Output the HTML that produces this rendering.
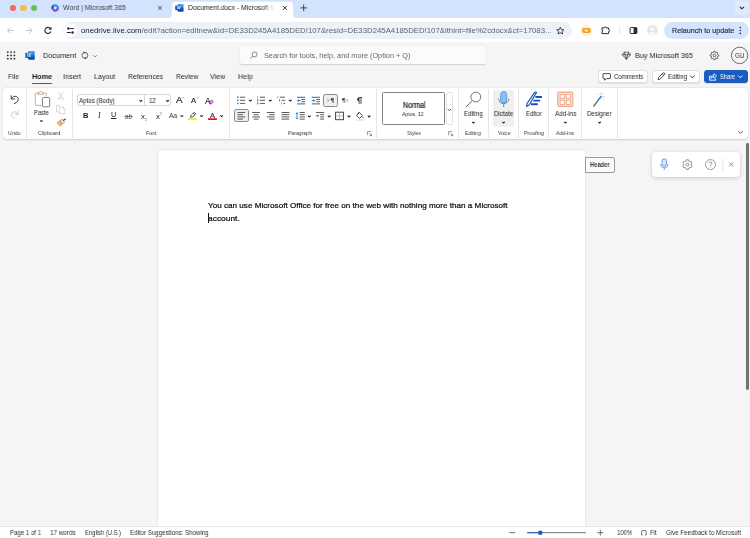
<!DOCTYPE html>
<html lang="en">
<head>
<meta charset="utf-8">
<title>Document.docx - Microsoft Word Online</title>
<style>
*{box-sizing:border-box;margin:0;padding:0}
html,body{width:750px;height:538px;overflow:hidden}
body{position:relative;font-family:"Liberation Sans",sans-serif;color:#242424;background:#f5f4f6;font-size:7px}
.abs,.t{position:absolute}
.t{white-space:nowrap;line-height:10px;height:10px;will-change:transform}
svg{position:absolute;overflow:visible}
#tabstrip{left:0;top:0;width:750px;height:18px;background:#d3e3fd}
#toolbar{left:0;top:17.6px;width:750px;height:24.4px;background:#fff}
#url{left:62.7px;top:22.1px;width:509px;height:16.8px;border-radius:8.4px;background:#edf1f9}
#relaunch{left:663.8px;top:21.9px;width:85.2px;height:17.2px;border-radius:8.6px;background:#d5e4fd}
#whead{left:0;top:42px;width:750px;height:46px;background:#f6f5f5}
#search{left:240px;top:46px;width:246px;height:18.2px;background:#fbfbfb;border-radius:2px;box-shadow:0 0.5px 1.2px rgba(0,0,0,.15)}
#ribbon{left:2.8px;top:88.2px;width:745.5px;height:50.8px;background:#fff;border-radius:4px;box-shadow:0 0.6px 2px rgba(0,0,0,.16)}
.sep{position:absolute;top:88.6px;width:1px;height:49px;background:#e6e6e6}
.gl{font-size:6.2px;color:#3a3a3a;top:127.6px}
.bl{font-size:7px;color:#1f1f1f;top:108.8px}
.menu{font-size:8px;color:#2c2c2c;top:71.9px}
#page{left:157.8px;top:149.8px;width:427.7px;height:376.5px;background:#fff;box-shadow:0 0 1.2px rgba(0,0,0,.22)}
#status{left:0;top:526px;width:750px;height:12px;background:#fff;border-top:1px solid #e6e6e6}
.st{font-size:7px;color:#2e2e2e;top:528.1px}
.btn{position:absolute;top:70.2px;height:12.7px;border-radius:3px;background:#fff;border:0.6px solid #e0e0e0;box-shadow:0 0.3px 0.8px rgba(0,0,0,.10)}
</style>
</head>
<body>
<!-- ===== CHROME TAB STRIP ===== -->
<div class="abs" id="tabstrip"></div>
<div class="abs" style="left:9.5px;top:4.7px;width:6.6px;height:6.6px;border-radius:50%;background:#ee6a5f"></div>
<div class="abs" style="left:20.1px;top:4.7px;width:6.6px;height:6.6px;border-radius:50%;background:#f5bd4f"></div>
<div class="abs" style="left:30.5px;top:4.7px;width:6.6px;height:6.6px;border-radius:50%;background:#61c454"></div>
<svg width="750" height="20" style="left:0;top:0" viewBox="0 0 750 20">
  <path d="M168.5 18 Q171.8 18 171.8 14.5 V5.5 Q171.8 1.8 175.5 1.8 H289.5 Q293.2 1.8 293.2 5.5 V14.5 Q293.2 18 296.5 18 Z" fill="#fff"/>
  <rect x="734.8" y="0.6" width="14.8" height="14.3" rx="4.5" fill="#e1eafd"/>
  <path d="M739.8 6.8 L741.9 8.8 L744 6.8" fill="none" stroke="#222" stroke-width="1.1"/>
  <!-- tab close X -->
  <path d="M158 5.9 L162 9.9 M162 5.9 L158 9.9" stroke="#444" stroke-width="0.85" fill="none"/>
  <path d="M282.9 5.9 L286.9 9.9 M286.9 5.9 L282.9 9.9" stroke="#222" stroke-width="0.9" fill="none"/>
  <path d="M300.4 7.9 H307 M303.7 4.6 V11.2" stroke="#333" stroke-width="0.9" fill="none"/>
  <!-- M365 favicon -->
  <g transform="translate(55.2 7.9)" fill="none" stroke-width="2.3" stroke-linecap="butt">
    <path d="M-2.3 1.3 A2.65 2.65 0 0 1 -1.3 -2.3" stroke="#2b55c8"/>
    <path d="M-1.3 -2.3 A2.65 2.65 0 0 1 2.55 -0.7" stroke="#3b93e6"/>
    <path d="M2.55 -0.7 A2.65 2.65 0 0 1 -0.2 2.65" stroke="#8b47c6"/>
    <path d="M-0.2 2.65 A2.65 2.65 0 0 1 -2.3 1.3" stroke="#5a5ad0"/>
  </g>
  <!-- Word favicon -->
  <g transform="translate(179.4 7.9)">
    <rect x="-1.6" y="-3.6" width="5.6" height="7.2" rx="0.6" fill="#2b7cd3"/>
    <rect x="-1.6" y="-0.1" width="5.6" height="1.9" fill="#185abd"/>
    <rect x="-1.6" y="1.8" width="5.6" height="1.8" rx="0.4" fill="#103f91"/>
    <rect x="-1.6" y="-3.6" width="5.6" height="1.8" rx="0.4" fill="#41a5ee"/>
    <rect x="-4.2" y="-2.3" width="4.7" height="4.7" rx="0.5" fill="#185abd"/>
  </g>
</svg>
<div class="t" style="left:63.3px;transform-origin:0 50%;transform:scaleX(0.9901);top:2.9px;font-size:6.9px;color:#3c4043">Word | Microsoft 365</div>
<div class="abs" style="left:188.4px;top:2.9px;width:88px;height:10px;overflow:hidden"><div class="t" style="left:0.0px;transform-origin:0 50%;transform:scaleX(0.9835);top:0;font-size:6.9px;color:#202124">Document.docx - Microsoft Word Online</div></div>
<div class="abs" style="left:262px;top:2.9px;width:15px;height:10px;background:linear-gradient(90deg,rgba(255,255,255,0),#fff 85%)"></div>
<div class="t" style="left:177.2px;top:5.5px;font-size:3.8px;line-height:5px;height:5px;color:#fff;font-weight:bold">W</div>

<!-- ===== CHROME TOOLBAR ===== -->
<div class="abs" id="toolbar"></div>
<div class="abs" id="url"></div>
<div class="abs" id="relaunch"></div>
<svg width="750" height="26" style="left:0;top:18px" viewBox="0 18 750 26">
  <!-- back / forward / reload -->
  <path d="M13.5 30.5 H7.6 M10.3 27.6 L7.4 30.5 L10.3 33.4" fill="none" stroke="#bcbfc4" stroke-width="0.9"/>
  <path d="M26 30.5 H31.9 M29.2 27.6 L32.1 30.5 L29.2 33.4" fill="none" stroke="#bcbfc4" stroke-width="0.9"/>
  <path d="M50.5 28.6 A3.1 3.1 0 1 0 50.9 31.5" fill="none" stroke="#2b2b2b" stroke-width="1.15"/>
  <path d="M51.5 26.7 V29.8 H48.4 Z" fill="#2b2b2b"/>
  <!-- site info -->
  <circle cx="70.5" cy="30.5" r="6.6" fill="#fff"/>
  <path d="M70 28.6 H74.2 M66.8 32.5 H71" stroke="#2b2b2b" stroke-width="1" fill="none"/>
  <circle cx="68.4" cy="28.6" r="1.25" fill="#2b2b2b"/><circle cx="72.6" cy="32.5" r="1.25" fill="#2b2b2b"/>
  <!-- star -->
  <path d="M560.3 27.2 L561.35 29.55 L563.9 29.8 L561.95 31.5 L562.55 34 L560.3 32.65 L558.05 34 L558.65 31.5 L556.7 29.8 L559.25 29.55 Z" fill="none" stroke="#2b2b2b" stroke-width="0.85" stroke-linejoin="round"/>
  <!-- orange ext -->
  <circle cx="586.3" cy="30.6" r="5.8" fill="#fdf0dc"/>
  <rect x="582.1" y="27.9" width="8.6" height="5.2" rx="1.8" fill="#f5a02c"/>
  <ellipse cx="586.2" cy="30.5" rx="1.5" ry="1.2" fill="#ffe9a8"/>
  <!-- puzzle -->
  <path d="M601.9 27.9 H604.25 A0.95 0.95 0 0 1 606.15 27.9 H608.6 V29.75 A0.95 0.95 0 0 1 608.6 31.65 V33.6 H601.9 V31.6 A0.9 0.9 0 0 0 601.9 29.8 Z" fill="none" stroke="#2b2b2b" stroke-width="1" stroke-linejoin="miter"/>
  <path d="M619.6 27 V34" stroke="#d3d9e6" stroke-width="0.7"/>
  <!-- side panel -->
  <rect x="630.1" y="27.6" width="6.8" height="5.9" rx="0.8" fill="#fff" stroke="#2b2b2b" stroke-width="1"/>
  <rect x="633.6" y="27.6" width="3.3" height="5.9" fill="#2b2b2b"/>
  <!-- avatar -->
  <circle cx="652.4" cy="30.3" r="5.4" fill="#e6e6e6"/>
  <circle cx="652.3" cy="29" r="2" fill="#fafafa"/>
  <path d="M648.9 34.5 A3.6 3.6 0 0 1 655.7 34.5 A5.3 5.3 0 0 1 648.9 34.5 Z" fill="#fafafa"/>
  <!-- dots -->
  <circle cx="740.3" cy="27.6" r="0.8" fill="#1f2a44"/><circle cx="740.3" cy="30.5" r="0.8" fill="#1f2a44"/><circle cx="740.3" cy="33.4" r="0.8" fill="#1f2a44"/>
</svg>
<div class="t" style="left:81.0px;transform-origin:0 50%;transform:scaleX(1.0258);top:26px;font-size:7.6px;color:#5f6368"><span style="color:#202124">onedrive.live.com</span>/edit?action=editnew&amp;id=DE33D245A4185DED!107&amp;resid=DE33D245A4185DED!107&amp;ithint=file%2cdocx&amp;ct=17083...</div>
<div class="t" style="left:671.6px;transform-origin:0 50%;transform:scaleX(1.0244);top:25.8px;font-size:7px;color:#1f2a44;-webkit-text-stroke:0.15px #1f2a44">Relaunch to update</div>

<!-- ===== WORD HEADER ===== -->
<div class="abs" id="whead"></div>
<div class="abs" id="search"></div>
<svg width="750" height="46" style="left:0;top:42px" viewBox="0 42 750 46">
  <!-- waffle -->
  <g fill="#1f1f1f"><circle cx="7.8" cy="52.1" r="0.85"/><circle cx="11.1" cy="52.1" r="0.85"/><circle cx="14.4" cy="52.1" r="0.85"/><circle cx="7.8" cy="55.4" r="0.85"/><circle cx="11.1" cy="55.4" r="0.85"/><circle cx="14.4" cy="55.4" r="0.85"/><circle cx="7.8" cy="58.7" r="0.85"/><circle cx="11.1" cy="58.7" r="0.85"/><circle cx="14.4" cy="58.7" r="0.85"/></g>
  <!-- Word icon -->
  <g transform="translate(30.1 55.4)">
    <rect x="-1.8" y="-4.1" width="6.3" height="8.2" rx="0.7" fill="#2b7cd3"/>
    <rect x="-1.8" y="-4.1" width="6.3" height="2.1" rx="0.5" fill="#41a5ee"/>
    <rect x="-1.8" y="0" width="6.3" height="2.1" fill="#185abd"/>
    <rect x="-1.8" y="2" width="6.3" height="2.1" rx="0.5" fill="#103f91"/>
    <rect x="-4.7" y="-2.6" width="5.3" height="5.3" rx="0.55" fill="#185abd"/>
  </g>
  <!-- sync -->
  <circle cx="84.9" cy="55.4" r="2.9" fill="none" stroke="#3a3a3a" stroke-width="0.75"/>
  <path d="M83.5 51.6 L85.6 52.5 L83.9 53.6 Z M86.3 59.2 L84.2 58.3 L85.9 57.2 Z" fill="#2b2b2b"/>
  <path d="M93.4 55.2 L95.2 57 L97 55.2" fill="none" stroke="#555" stroke-width="0.75"/>
  <!-- search icon -->
  <circle cx="254.6" cy="54.4" r="2.5" fill="none" stroke="#666" stroke-width="0.75"/>
  <path d="M252.8 56.2 L250.3 58.7" stroke="#666" stroke-width="0.8" fill="none"/>
  <!-- diamond -->
  <path d="M624.2 52.2 H628.6 L630.6 54.7 L626.4 59.3 L622.2 54.7 Z M622.2 54.7 H630.6 M624.2 52.2 L625.1 54.7 L626.4 59.3 L627.7 54.7 L628.6 52.2" fill="none" stroke="#2b2b2b" stroke-width="0.7" stroke-linejoin="round"/>
  <!-- gear -->
  <g transform="translate(714.5 55.5)" fill="none" stroke="#4a4a4a" stroke-width="0.8" stroke-linejoin="round">
    <path d="M-0.80 -3.20 L-0.60 -4.26 L0.60 -4.26 L0.80 -3.20 L1.70 -2.83 L2.59 -3.43 L3.43 -2.59 L2.83 -1.70 L3.20 -0.80 L4.26 -0.60 L4.26 0.60 L3.20 0.80 L2.83 1.70 L3.43 2.59 L2.59 3.43 L1.70 2.83 L0.80 3.20 L0.60 4.26 L-0.60 4.26 L-0.80 3.20 L-1.70 2.83 L-2.59 3.43 L-3.43 2.59 L-2.83 1.70 L-3.20 0.80 L-4.26 0.60 L-4.26 -0.60 L-3.20 -0.80 L-2.83 -1.70 L-3.43 -2.59 L-2.59 -3.43 L-1.70 -2.83 Z"/>
    <circle r="1.4"/>
  </g>
  <circle cx="739.6" cy="55.4" r="8.2" fill="#f6f5f5" stroke="#4a4a4a" stroke-width="0.8"/>
</svg>
<div class="t" style="left:26.9px;top:53.2px;font-size:4.6px;line-height:6px;height:6px;color:#cfe4fb;font-weight:bold">W</div>
<div class="t" style="left:42.8px;transform-origin:0 50%;transform:scaleX(0.9104);top:50.8px;font-size:8px;color:#242424">Document</div>
<div class="t" style="left:263.6px;transform-origin:0 50%;transform:scaleX(1.0164);top:50.8px;font-size:7.2px;color:#666">Search for tools, help, and more (Option + Q)</div>
<div class="t" style="left:634.8px;transform-origin:0 50%;transform:scaleX(0.9542);top:50.6px;font-size:7.6px;color:#242424">Buy Microsoft 365</div>
<div class="t" style="left:735.0px;transform-origin:0 50%;transform:scaleX(0.8952);top:50.5px;font-size:7px;color:#333">GU</div>

<!-- ===== MENU ROW ===== -->
<div class="t menu" style="left:8.4px;transform-origin:0 50%;transform:scaleX(0.8533);">File</div>
<div class="t menu" style="left:31.6px;transform-origin:0 50%;transform:scaleX(0.9085);font-weight:bold;color:#1a1a1a">Home</div>
<div class="abs" style="left:31.9px;top:82.7px;width:19.8px;height:1.3px;background:#2160c4;border-radius:1px"></div>
<div class="t menu" style="left:63.4px;transform-origin:0 50%;transform:scaleX(0.9093);">Insert</div>
<div class="t menu" style="left:94.3px;transform-origin:0 50%;transform:scaleX(0.8863);">Layout</div>
<div class="t menu" style="left:128.4px;transform-origin:0 50%;transform:scaleX(0.8553);">References</div>
<div class="t menu" style="left:175.8px;transform-origin:0 50%;transform:scaleX(0.8538);">Review</div>
<div class="t menu" style="left:210.4px;transform-origin:0 50%;transform:scaleX(0.8836);">View</div>
<div class="t menu" style="left:238.4px;transform-origin:0 50%;transform:scaleX(0.8995);">Help</div>
<div class="btn" style="left:598px;width:49.8px"></div>
<div class="btn" style="left:652px;width:48px"></div>
<div class="btn" style="left:704.1px;width:44.3px;background:#1a5cbf;border-color:#1a5cbf"></div>
<svg width="160" height="20" style="left:590px;top:68px" viewBox="590 68 160 20">
  <!-- comment -->
  <path d="M603.6 73.6 H609.8 Q610.4 73.6 610.4 74.2 V78 Q610.4 78.6 609.8 78.6 H606.4 L604.6 80.2 V78.6 H603.6 Q603 78.6 603 78 V74.2 Q603 73.6 603.6 73.6 Z" fill="none" stroke="#2b2b2b" stroke-width="0.85" stroke-linejoin="round"/>
  <!-- pencil -->
  <path d="M658 79.6 L658.6 77.4 L663 73 Q663.8 72.4 664.5 73.1 Q665.2 73.9 664.5 74.6 L660.2 79 Z M662.2 73.8 L663.8 75.4" fill="none" stroke="#2b2b2b" stroke-width="0.85" stroke-linejoin="round"/>
  <path d="M690.2 75.6 L692.4 77.8 L694.6 75.6" fill="none" stroke="#2b2b2b" stroke-width="1"/>
  <!-- share -->
  <path d="M711.2 76 H709.6 V80.2 H715.6 V78.6" fill="none" stroke="#fff" stroke-width="0.9" stroke-linejoin="round"/>
  <path d="M711 78.4 Q711.2 75.4 714 75.3 V73.6 L716.6 76 L714 78.3 V76.8 Q712 76.8 711 78.4 Z" fill="none" stroke="#fff" stroke-width="0.85" stroke-linejoin="round"/>
  <path d="M738.2 75.6 L740.4 77.8 L742.6 75.6" fill="none" stroke="#fff" stroke-width="1"/>
</svg>
<div class="t" style="left:614.0px;transform-origin:0 50%;transform:scaleX(0.8657);top:71.6px;font-size:7px;color:#242424">Comments</div>
<div class="t" style="left:667.8px;transform-origin:0 50%;transform:scaleX(0.8969);top:71.6px;font-size:7px;color:#242424">Editing</div>
<div class="t" style="left:719.8px;transform-origin:0 50%;transform:scaleX(0.8134);top:71.6px;font-size:7px;color:#fff">Share</div>

<!-- ===== RIBBON ===== -->
<div class="abs" id="ribbon"></div>
<div class="sep" style="left:25.8px"></div>
<div class="sep" style="left:71.8px"></div>
<div class="sep" style="left:229.4px"></div>
<div class="sep" style="left:376.4px"></div>
<div class="sep" style="left:457.6px"></div>
<div class="sep" style="left:488px"></div>
<div class="sep" style="left:517.9px"></div>
<div class="sep" style="left:548.2px"></div>
<div class="sep" style="left:581px"></div>
<div class="sep" style="left:616.6px"></div>
<!-- selected / hover backgrounds -->
<div class="abs" style="left:492.8px;top:89.8px;width:21.6px;height:37.4px;background:#efefef;border-radius:2px"></div>
<div class="abs" style="left:323px;top:94px;width:14.8px;height:12.7px;background:#efefef;border:0.8px solid #8a8a8a;border-radius:2.2px"></div>
<div class="abs" style="left:234px;top:109.2px;width:14.8px;height:12.6px;background:#efefef;border:0.8px solid #8a8a8a;border-radius:2.2px"></div>
<!-- font boxes -->
<div class="abs" style="left:77.4px;top:94.4px;width:93.3px;height:12.1px;border:0.6px solid #d8d8d8;border-radius:2px;background:#fff"></div>
<div class="abs" style="left:144.3px;top:94.4px;width:0.6px;height:12.1px;background:#d8d8d8"></div>
<!-- styles gallery -->
<div class="abs" style="left:381.6px;top:92.2px;width:63px;height:32.4px;border:1.1px solid #808080;border-radius:1.5px;background:#fff"></div>
<div class="abs" style="left:445.6px;top:92.2px;width:7.8px;height:32.4px;border:0.6px solid #e2e2e2;border-radius:1.5px;background:#fff"></div>

<svg width="750" height="54" style="left:0;top:86px" viewBox="0 86 750 54">
  <!-- Undo -->
  <path d="M11.2 95.3 V99 H14.9" fill="none" stroke="#2b2b2b" stroke-width="0.9" stroke-linejoin="round"/>
  <path d="M11.4 98.8 Q13.6 95 16.6 96.4 Q19.2 98 17.9 100.9 Q17 102.5 13.8 103.8" fill="none" stroke="#2b2b2b" stroke-width="0.9"/>
  <!-- Redo (disabled) -->
  <path d="M18.2 110.7 V114.3 H14.6" fill="none" stroke="#c8c8c8" stroke-width="0.85" stroke-linejoin="round"/>
  <path d="M18 114.1 Q15.7 110.7 12.9 112 Q10.4 113.4 11.6 116 Q12.4 117.4 15 118.6" fill="none" stroke="#c8c8c8" stroke-width="0.85"/>
  <!-- Paste -->
  <path d="M41.6 105.4 H36 Q35.3 105.4 35.3 104.7 V93.8 Q35.3 93.1 36 93.1 H38 M43.4 93.1 H45.6 Q46.3 93.1 46.3 93.8 V96.6" fill="none" stroke="#f0a04b" stroke-width="0.9"/>
  <path d="M37.8 94.2 V93 L40.7 91.4 L43.6 93 V94.2 Z" fill="#fff" stroke="#8a8a8a" stroke-width="0.7" stroke-linejoin="round"/>
  <rect x="42.4" y="97.5" width="7.3" height="9.3" rx="0.9" fill="#fff" stroke="#666c75" stroke-width="0.85"/>
  <path d="M40.15 120.3 L41.4 121.55 L42.65 120.3" fill="none" stroke="#2a2a2a" stroke-width="1.05"/>
  <!-- Cut (disabled) -->
  <path d="M58.6 92.6 L62 98 M62.8 92.6 L59.4 98" stroke="#c4c4c4" stroke-width="0.7" fill="none"/>
  <circle cx="58.9" cy="98.6" r="0.95" fill="none" stroke="#a9cfe8" stroke-width="0.6"/><circle cx="62.5" cy="98.6" r="0.95" fill="none" stroke="#a9cfe8" stroke-width="0.6"/>
  <!-- Copy (disabled) -->
  <path d="M59.6 106.6 V105.4 H56.5 V112 H58.8" fill="none" stroke="#c8c8c8" stroke-width="0.7"/>
  <path d="M59.2 107 H63 L64.8 108.8 V113.6 H59.2 Z M63 107 V108.8 H64.8" fill="#fff" stroke="#c8c8c8" stroke-width="0.7" stroke-linejoin="round"/>
  <!-- Format painter -->
  <path d="M62.9 120.8 L65.4 119" stroke="#444" stroke-width="1.1" stroke-linecap="round" fill="none"/>
  <path d="M60.3 120.6 L62.2 119.3 L64.5 122.3 L62.4 123.7 Z" fill="#fff" stroke="#555" stroke-width="0.6" stroke-linejoin="round"/>
  <path d="M57 122.9 L60.2 120.6 L62.4 123.8 L60.4 126.2 Z" fill="#f7b26a" stroke="#e8842a" stroke-width="0.7" stroke-linejoin="round"/>
  <!-- font chevrons -->
  <path d="M139.45 100.20 L140.8 101.50 L142.15 100.20" fill="none" stroke="#2a2a2a" stroke-width="1.05"/>
  <path d="M166.25 100.20 L167.6 101.50 L168.95 100.20" fill="none" stroke="#2a2a2a" stroke-width="1.05"/>
  <!-- grow/shrink carets -->
  <path d="M182.2 98.4 L183.2 97.3 L184.2 98.4" fill="none" stroke="#2b88d8" stroke-width="0.6"/>
  <path d="M196.6 97.3 L197.6 98.4 L198.6 97.3" fill="none" stroke="#2b88d8" stroke-width="0.6"/>
  <!-- clear fmt eraser -->
  <path d="M208.9 102.7 L211.7 99.9 L213.5 101.6 L210.8 104.4 Z" fill="#d9a3e6" stroke="#a83cc0" stroke-width="0.8" stroke-linejoin="round"/>
  <!-- Aa / highlight / font color chevrons -->
  <path d="M180.45 115.30 L181.8 116.60 L183.15 115.30" fill="none" stroke="#2a2a2a" stroke-width="1.05"/>
  <path d="M200.25 115.30 L201.6 116.60 L202.95 115.30" fill="none" stroke="#2a2a2a" stroke-width="1.05"/>
  <path d="M220.25 115.30 L221.6 116.60 L222.95 115.30" fill="none" stroke="#2a2a2a" stroke-width="1.05"/>
  <!-- highlighter -->
  <path d="M190.4 117.3 L191 115.4 L194.1 112.3 L195.7 113.9 L192.6 117 Z M193.2 113.2 L194.8 114.8" fill="none" stroke="#2b2b2b" stroke-width="0.8" stroke-linejoin="round"/>
  <rect x="187.8" y="118.3" width="9.2" height="1.8" rx="0.5" fill="#fbe71e"/>
  <rect x="207.9" y="118.2" width="9.1" height="1.8" rx="0.4" fill="#e81123"/>
  <!-- strikethrough line -->
  <path d="M124.4 116.5 H132.8" stroke="#444" stroke-width="0.6"/>
  <!-- ===== Paragraph row 1 ===== -->
  <g stroke="#4a4a4a" stroke-width="0.9" fill="none">
    <path d="M240 97.2 H245.2 M240 100.3 H245.2 M240 103.4 H245.2"/>
    <path d="M259.8 97.2 H265 M259.8 100.3 H265 M259.8 103.4 H265"/>
    <path d="M279.8 97.2 H285 M281.6 100.3 H285 M283.4 103.4 H285"/>
    <path d="M297 97.3 H305.2 M301.4 99.5 H305.2 M301.4 101.7 H305.2 M297 103.9 H305.2"/>
    <path d="M311.8 97.3 H320 M316.2 99.5 H320 M316.2 101.7 H320 M311.8 103.9 H320"/>
  </g>
  <g fill="#2b88d8">
    <rect x="237.1" y="96.5" width="1.5" height="1.5"/><rect x="237.1" y="99.6" width="1.5" height="1.5"/><rect x="237.1" y="102.7" width="1.5" height="1.5"/>
    <rect x="257.3" y="96.2" width="0.7" height="2"/><rect x="257.1" y="99.3" width="1.2" height="2"/><rect x="257.1" y="102.4" width="1.2" height="2"/>
    <rect x="277.5" y="96.2" width="0.7" height="2"/><rect x="279" y="99.3" width="1" height="2"/><rect x="281.2" y="102.6" width="0.7" height="1.8"/>
    <path d="M297 100.6 L299 98.9 V100.1 H300.7 V101.1 H299 V102.3 Z"/>
    <path d="M315.4 100.6 L313.4 98.9 V100.1 H311.7 V101.1 H313.4 V102.3 Z"/>
  </g>
  <g fill="none" stroke="#2a2a2a" stroke-width="1.05">
    <path d="M249.05 99.80 L250.4 101.10 L251.75 99.80"/><path d="M268.95 99.80 L270.3 101.10 L271.65 99.80"/><path d="M288.95 99.80 L290.3 101.10 L291.65 99.80"/>
    <path d="M307.95 115.60 L309.3 116.90 L310.65 115.60"/><path d="M327.85 115.60 L329.2 116.90 L330.55 115.60"/><path d="M347.55 115.60 L348.9 116.90 L350.25 115.60"/><path d="M367.75 115.60 L369.1 116.90 L370.45 115.60"/>
  </g>
  <!-- LTR / RTL / pilcrow -->
  <path d="M327.4 99.2 L328.8 100.5 L327.4 101.8" fill="none" stroke="#2f6fb5" stroke-width="0.7"/>
  <path d="M333.9 98.5 H331.8 M332.5 98.5 V102.7 M333.5 98.5 V102.7" fill="none" stroke="#2b2b2b" stroke-width="0.55"/>
  <path d="M332.3 98.3 H331.8 A1.15 1.15 0 0 0 331.8 100.6 H332.3 Z" fill="#2b2b2b"/>
  <path d="M345.2 98.5 H343.1 M343.8 98.5 V102.7 M344.8 98.5 V102.7" fill="none" stroke="#2b2b2b" stroke-width="0.55"/>
  <path d="M343.6 98.3 H343.1 A1.15 1.15 0 0 0 343.1 100.6 H343.6 Z" fill="#2b2b2b"/>
  <path d="M348 99.2 L346.6 100.5 L348 101.8" fill="none" stroke="#2b88d8" stroke-width="0.7"/>
  <path d="M362 97.5 H359.2 A1.9 1.9 0 0 0 359.2 101.2 V103.9 M361 97.5 V103.9" fill="none" stroke="#222" stroke-width="0.8"/>
  <path d="M359.4 97.5 A1.85 1.85 0 0 0 359.4 101.2 Z" fill="#222"/>
  <!-- ===== Paragraph row 2 ===== -->
  <g stroke="#4a4a4a" stroke-width="0.9" fill="none">
    <path d="M237.4 112.5 H245.2 M237.4 114.7 H243 M237.4 116.9 H245.2 M237.4 119.1 H243"/>
    <path d="M252.2 112.5 H260 M253.6 114.7 H258.6 M252.2 116.9 H260 M253.6 119.1 H258.6"/>
    <path d="M266.8 112.5 H274.6 M269.2 114.7 H274.6 M266.8 116.9 H274.6 M269.2 119.1 H274.6"/>
    <path d="M281.5 112.5 H289.3 M281.5 114.7 H289.3 M281.5 116.9 H289.3 M281.5 119.1 H289.3"/>
    <path d="M299.6 112.5 H304.8 M299.6 114.7 H304.8 M299.6 116.9 H304.8 M299.6 119.1 H304.8"/>
    <path d="M316 112.5 H324 M320.2 114.7 H324 M320.2 116.9 H324 M320.2 119.1 H324"/>
  </g>
  <g fill="#2b88d8">
    <path d="M297 112 L298.5 113.9 H297.45 V117.7 H298.5 L297 119.6 L295.5 117.7 H296.55 V113.9 H295.5 Z"/>
    <path d="M319.2 115.8 L317.4 114.2 V115.3 H315.8 V116.3 H317.4 V117.4 Z"/>
  </g>
  <!-- borders -->
  <rect x="335.6" y="112.2" width="7.8" height="7.5" fill="#fff" stroke="#333" stroke-width="0.9"/>
  <path d="M339.5 112.4 V119.5 M335.8 115.95 H343.2" stroke="#9a9a9a" stroke-width="0.6" fill="none"/>
  <!-- shading -->
  <path d="M359.3 112.5 L362.4 115.6 L359.5 118.5 L356.5 115.5 Z M357.6 114.3 L359.2 111.9" fill="#fff" stroke="#2b2b2b" stroke-width="0.85" stroke-linejoin="round"/>
  <path d="M363 116 Q364 117.4 363.5 118 Q363 118.5 362.5 118 Q362 117.4 363 116 Z" fill="#2b88d8"/>
  <rect x="356.2" y="119.4" width="7.6" height="1.3" fill="#f4f4f4" stroke="#ccc" stroke-width="0.3"/>
  <!-- dialog launchers -->
  <g fill="none" stroke="#555" stroke-width="0.6">
    <path d="M371 131.6 H367.4 V135.2 M369.2 133.4 L371.4 135.6 M371.5 133.8 V135.7 H369.6"/>
    <path d="M452.2 131.6 H448.6 V135.2 M450.4 133.4 L452.6 135.6 M452.7 133.8 V135.7 H450.8"/>
  </g>
  <path d="M447.7 108.9 L449.4 110.6 L451.1 108.9" fill="none" stroke="#333" stroke-width="0.85"/>
  <path d="M738.3 131.2 L740.5 133.4 L742.7 131.2" fill="none" stroke="#3a3a3a" stroke-width="0.8"/>
  <!-- ===== Large buttons ===== -->
  <!-- Editing magnifier -->
  <circle cx="475.8" cy="97" r="4.9" fill="none" stroke="#555" stroke-width="0.8"/>
  <path d="M472.3 100.5 L465.8 107.2" stroke="#555" stroke-width="0.9" fill="none"/>
  <!-- Dictate mic -->
  <rect x="500.7" y="91.6" width="6" height="11.4" rx="3" fill="#83c3f3" stroke="#3f87d6" stroke-width="0.7"/>
  <path d="M498.6 98.6 A5.1 5.1 0 0 0 508.8 98.6 M503.7 103.8 V107.2" fill="none" stroke="#5b6f8e" stroke-width="0.8"/>
  <!-- Editor -->
  <path d="M526.6 106.4 L527.2 103.2 L534.4 92.6 Q535.4 91.6 536.6 92.4 L533.6 97.2 L529.4 104.8 Z" fill="#fff" stroke="#1b50b6" stroke-width="1.15" stroke-linejoin="round"/>
  <path d="M535.4 97 H542 M533.4 100.6 H540.2 M531 104.2 H537.8" stroke="#1b50b6" stroke-width="1.9" fill="none"/>
  <!-- Add-ins -->
  <rect x="557.8" y="92.1" width="15" height="14.3" rx="0.8" fill="#fbe1d6" stroke="#e9855e" stroke-width="0.8"/>
  <g fill="#fff" stroke="#e9855e" stroke-width="0.6">
    <rect x="560.1" y="94.3" width="4.4" height="4.2"/><rect x="566.2" y="94.3" width="4.4" height="4.2"/>
    <rect x="560.1" y="100.2" width="4.4" height="4.2"/><rect x="566.2" y="100.2" width="4.4" height="4.2"/>
  </g>
  <!-- Designer -->
  <path d="M593.8 106 L599.8 98.2" stroke="#666" stroke-width="1.3" stroke-linecap="round" fill="none"/>
  <path d="M599.6 98.5 L601.2 96.4" stroke="#2b88d8" stroke-width="1.6" stroke-linecap="round" fill="none"/>
  <path d="M600.6 92.8 V94.2 M598 93.8 L598.8 94.8 M603.4 94 L602.6 95 M604.4 96.8 H603 M603.8 99.6 L602.8 98.8" stroke="#3a8ad8" stroke-width="0.55" fill="none"/>
  <!-- big-button chevrons -->
  <g fill="none" stroke="#2a2a2a" stroke-width="1.05">
    <path d="M472.15 121.85 L473.4 123.1 L474.65 121.85"/><path d="M502.35 121.85 L503.6 123.1 L504.85 121.85"/>
    <path d="M564.05 121.85 L565.3 123.1 L566.55 121.85"/><path d="M598.35 121.85 L599.6 123.1 L600.85 121.85"/>
  </g>
</svg>
<!-- ribbon text -->
<div class="t gl" style="left:8.0px;transform-origin:0 50%;transform:scaleX(0.8583);">Undo</div>
<div class="t gl" style="left:38.3px;transform-origin:0 50%;transform:scaleX(0.8420);">Clipboard</div>
<div class="t gl" style="left:146.1px;transform-origin:0 50%;transform:scaleX(0.8393);">Font</div>
<div class="t gl" style="left:288.3px;transform-origin:0 50%;transform:scaleX(0.8268);">Paragraph</div>
<div class="t gl" style="left:407.4px;transform-origin:0 50%;transform:scaleX(0.8304);">Styles</div>
<div class="t gl" style="left:465.3px;transform-origin:0 50%;transform:scaleX(0.8350);">Editing</div>
<div class="t gl" style="left:497.5px;transform-origin:0 50%;transform:scaleX(0.8256);">Voice</div>
<div class="t gl" style="left:523.8px;transform-origin:0 50%;transform:scaleX(0.8678);">Proofing</div>
<div class="t gl" style="left:556.3px;transform-origin:0 50%;transform:scaleX(0.8530);">Add-ins</div>
<div class="t bl" style="left:33.6px;transform-origin:0 50%;transform:scaleX(0.8321);top:107.6px">Paste</div>
<div class="t bl" style="left:464.0px;transform-origin:0 50%;transform:scaleX(0.8736);">Editing</div>
<div class="t bl" style="left:493.9px;transform-origin:0 50%;transform:scaleX(0.8854);">Dictate</div>
<div class="t bl" style="left:526.0px;transform-origin:0 50%;transform:scaleX(0.8635);">Editor</div>
<div class="t bl" style="left:554.6px;transform-origin:0 50%;transform:scaleX(0.9016);">Add-ins</div>
<div class="t bl" style="left:587.0px;transform-origin:0 50%;transform:scaleX(0.8781);">Designer</div>
<div class="t" style="left:79.0px;transform-origin:0 50%;transform:scaleX(0.8797);top:95.8px;font-size:7px;color:#242424">Aptos (Body)</div>
<div class="t" style="left:148.8px;transform-origin:0 50%;transform:scaleX(0.8208);top:95.8px;font-size:7px;color:#242424">12</div>
<div class="t" style="left:403.0px;transform-origin:0 50%;transform:scaleX(0.8564);top:100.9px;font-size:8.2px;color:#1a1a1a;-webkit-text-stroke:0.2px #1a1a1a">Normal</div>
<div class="t" style="left:402.4px;transform-origin:0 50%;transform:scaleX(0.8518);top:109.1px;font-size:6px;color:#333">Aptos, 12</div>
<!-- font buttons -->
<div class="t" style="left:82.6px;top:110.5px;font-size:7.6px;font-weight:bold;color:#222">B</div>
<div class="t" style="left:98px;top:110.5px;font-size:7.6px;font-style:italic;color:#222;font-family:'Liberation Serif',serif">I</div>
<div class="t" style="left:111px;top:110.4px;font-size:7.4px;color:#222;text-decoration:underline;text-decoration-thickness:0.6px;text-underline-offset:0.9px">U</div>
<div class="t" style="left:125.3px;top:112.1px;font-size:6.4px;color:#444">ab</div>
<div class="t" style="left:141.4px;top:112px;font-size:7.8px;color:#222">x</div>
<div class="t" style="left:145.4px;top:115.2px;font-size:3.8px;color:#2b88d8">2</div>
<div class="t" style="left:156px;top:112px;font-size:7.8px;color:#222">x</div>
<div class="t" style="left:160px;top:109px;font-size:3.8px;color:#2b88d8">2</div>
<div class="t" style="left:168.8px;transform-origin:0 50%;transform:scaleX(0.9064);top:110.8px;font-size:7.4px;color:#333">Aa</div>
<div class="t" style="left:175.6px;top:94.9px;font-size:9.8px;color:#2a2a2a;-webkit-text-stroke:0.2px #2a2a2a">A</div>
<div class="t" style="left:191.2px;top:96.3px;font-size:7.6px;color:#2a2a2a;-webkit-text-stroke:0.2px #2a2a2a">A</div>
<div class="t" style="left:204.5px;top:95.6px;font-size:8.6px;color:#2a2a2a;-webkit-text-stroke:0.15px #2a2a2a">A</div>
<div class="t" style="left:210.1px;top:110.5px;font-size:7.4px;color:#2a2a2a;-webkit-text-stroke:0.15px #2a2a2a">A</div>

<!-- ===== DOCUMENT AREA ===== -->
<div class="abs" id="page"></div>
<div class="abs" style="left:585.4px;top:157.4px;width:29.2px;height:15.2px;background:#fcfbfc;border:0.8px solid #9a9a9a;border-radius:0 2px 2px 0"></div>
<div class="t" style="left:590.2px;transform-origin:0 50%;transform:scaleX(0.8855);top:160px;font-size:6.6px;color:#3c3c3c;font-weight:bold">Header</div>
<div class="abs" style="left:652.2px;top:152.2px;width:87.8px;height:25.2px;background:#fff;border-radius:4px;box-shadow:0 1px 4px rgba(0,0,0,.18),0 0 1px rgba(0,0,0,.12)"></div>
<div class="abs" style="left:746.1px;top:142.8px;width:2.8px;height:247.4px;background:#737373;border-radius:1.4px"></div>
<svg width="100" height="30" style="left:650px;top:150px" viewBox="650 150 100 30">
  <rect x="662.1" y="158.8" width="4.3" height="7.2" rx="2.15" fill="#dfe9fb" stroke="#3b6fd6" stroke-width="0.7"/>
  <path d="M660.5 164 A3.75 3.75 0 0 0 668 164 M664.25 167.8 V170" fill="none" stroke="#3b6fd6" stroke-width="0.7"/>
  <g transform="translate(687.4 164.6)" fill="none" stroke="#666" stroke-width="0.7" stroke-linejoin="round">
    <path d="M-1.39 -3.43 L-1.10 -4.77 L1.10 -4.77 L1.39 -3.43 L2.28 -2.92 L3.58 -3.34 L4.69 -1.43 L3.66 -0.51 L3.66 0.51 L4.69 1.43 L3.58 3.34 L2.28 2.92 L1.39 3.43 L1.10 4.77 L-1.10 4.77 L-1.39 3.43 L-2.28 2.92 L-3.58 3.34 L-4.69 1.43 L-3.66 0.51 L-3.66 -0.51 L-4.69 -1.43 L-3.58 -3.34 L-2.28 -2.92 Z"/>
    <circle r="1.4"/>
  </g>
  <circle cx="710.5" cy="164.6" r="5" fill="none" stroke="#666" stroke-width="0.65"/>
  <path d="M708.9 163.3 Q708.9 162 710.4 162 Q711.9 162 711.9 163.3 Q711.9 164.2 710.4 165 V165.8" fill="none" stroke="#666" stroke-width="0.65"/>
  <circle cx="710.4" cy="167.1" r="0.45" fill="#666"/>
  <path d="M722.8 158.6 V170.8" stroke="#d0d0d0" stroke-width="0.6"/>
  <path d="M729.2 162.4 L733.4 166.6 M733.4 162.4 L729.2 166.6" stroke="#666" stroke-width="0.7" fill="none"/>
</svg>
<div class="t" style="left:207.8px;transform-origin:0 50%;transform:scaleX(1.0303);top:200px;font-size:7.9px;line-height:11px;height:11px;color:#111;-webkit-text-stroke:0.24px #111">You can use Microsoft Office for free on the web with nothing more than a Microsoft</div>
<div class="t" style="left:207.8px;transform-origin:0 50%;transform:scaleX(1.0655);top:212.5px;font-size:7.9px;line-height:11px;height:11px;color:#111;-webkit-text-stroke:0.24px #111">account.</div>
<div class="abs" style="left:207.6px;top:213px;width:0.8px;height:9.6px;background:#111"></div>

<!-- ===== STATUS BAR ===== -->
<div class="abs" id="status"></div>
<div class="t st" style="left:10.0px;transform-origin:0 50%;transform:scaleX(0.8656);">Page 1 of 1</div>
<div class="t st" style="left:50.0px;transform-origin:0 50%;transform:scaleX(0.9012);">17 words</div>
<div class="t st" style="left:85.0px;transform-origin:0 50%;transform:scaleX(0.8336);">English (U.S.)</div>
<div class="t st" style="left:130.0px;transform-origin:0 50%;transform:scaleX(0.8782);">Editor Suggestions: Showing</div>
<div class="t st" style="left:616.8px;transform-origin:0 50%;transform:scaleX(0.8489);">100%</div>
<div class="t st" style="left:650.0px;transform-origin:0 50%;transform:scaleX(0.8353);">Fit</div>
<div class="t st" style="left:665.8px;transform-origin:0 50%;transform:scaleX(0.8802);">Give Feedback to Microsoft</div>
<svg width="150" height="12" style="left:505px;top:526px" viewBox="505 526 150 12">
  <path d="M509.4 532.7 H515.2" stroke="#333" stroke-width="0.7"/>
  <path d="M527.3 532.7 H586" stroke="#4a4a4a" stroke-width="0.8"/>
  <path d="M527.3 532.7 H540" stroke="#185abd" stroke-width="0.9"/>
  <circle cx="540.3" cy="532.7" r="2.3" fill="#185abd"/>
  <path d="M597.4 532.7 H603.2 M600.3 529.8 V535.6" stroke="#333" stroke-width="0.7" fill="none"/>
  <path d="M642.7 535 H641.6 V531.3 Q641.6 530.6 642.3 530.6 H645.5 Q646.2 530.6 646.2 531.3 V535 H645.1" fill="none" stroke="#333" stroke-width="0.7"/>
</svg>
</body>
</html>
